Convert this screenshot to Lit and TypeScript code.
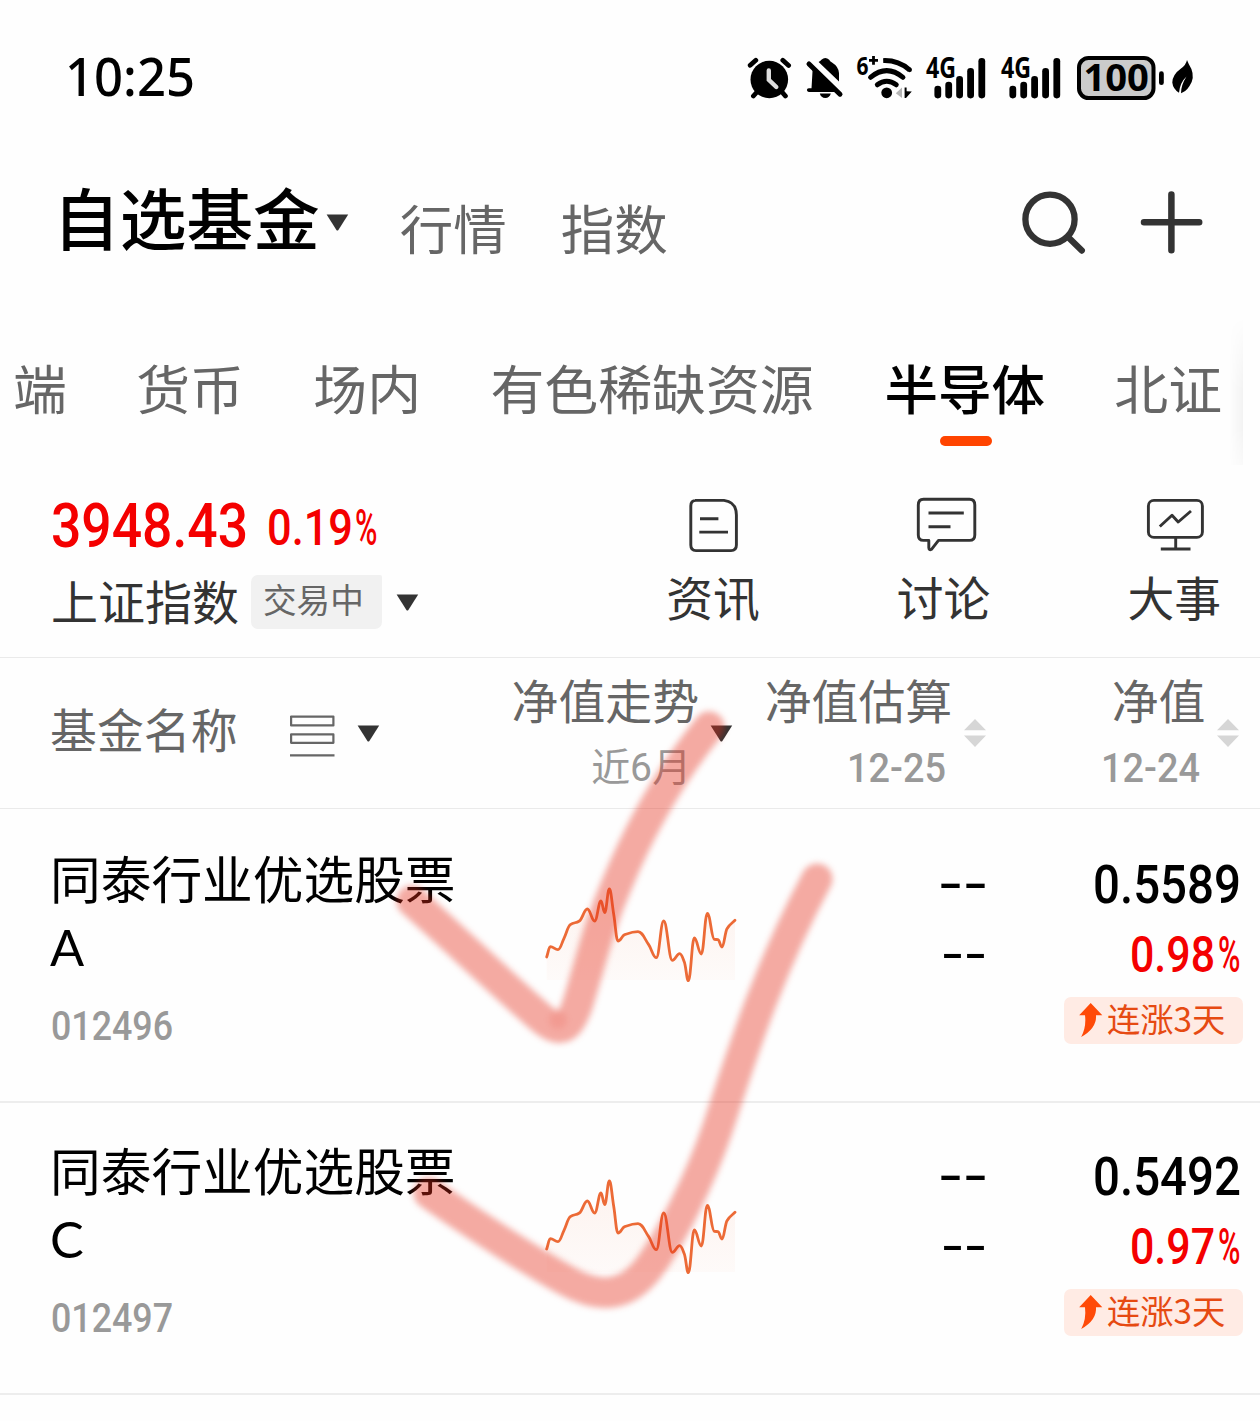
import { LitElement, html, svg, css, TemplateResult } from "lit";
import { customElement, property } from "lit/decorators.js";

const NUM = "Roboto, sans-serif";

/** Inline icon whose viewBox is a window (x, y, w, h) of the drawing grid. */
const icon = (x: number, y: number, w: number, h: number, body: unknown, cls = "") =>
  html`<svg class=${cls} width=${w} height=${h} viewBox="${x} ${y} ${w} ${h}">${body}</svg>`;

/** Figures set to an exact width; the box is as tall as the capitals. */
const fig = (
  text: string, w: number, h: number, cls = "", weight = 500, family = NUM, cap = 0.711,
): TemplateResult =>
  html`<svg class="fig ${cls}" width=${w} height=${h}><text x="0" y=${h} font-size=${h / cap}
    font-weight=${weight} font-family=${family} textLength=${w}
    lengthAdjust="spacingAndGlyphs" fill="currentColor">${text}</text></svg>`;

/** Condensed percent sign, 23 x 36. */
const percent = (cls = "") =>
  html`<svg class=${cls} width="23" height="36"><text transform="translate(0 36) scale(.61 1)" font-size="50"
    font-weight="500" font-family=${NUM} fill="currentColor">%</text></svg>`;

const caret = (cls: string) =>
  html`<svg class=${cls} width="23" height="17" viewBox="0 0 23 17"><path d="M.6 .6H22.2L12.4 16Q11.4 17.2 10.4 16Z" fill="#333"/></svg>`;

const shared = css`
  :host { display: block; }
  svg { display: block; flex: none; overflow: visible; }
  .row { display: flex; align-items: flex-start; }
  div, span { box-sizing: border-box; white-space: nowrap; }
`;

@customElement("status-bar")
class StatusBar extends LitElement {
  static styles = [shared, css`
    .bar { height: 150px; padding: 56px 66px 0 67px; }
    .time { margin-top: 2px; margin-left: -2px; }
    .icons { margin-left: auto; }
    .alarm { margin-right: 15px; }
    .bell { margin-right: 15px; }
    .wifi { margin-right: 14px; }
    .cell { margin-right: 14.6px; }
    .batt { margin-right: 8px; }
  `];

  private cell() {
    const bars = [[8.4, 29.7], [19.3, 25.7], [30.2, 20], [41.2, 12], [52.4, 2]];
    return html`<svg class="cell" width="61" height="44" viewBox="0 0 61 44">
      <text x="0" y="22" font-family="Open Sans, sans-serif" font-weight="700" font-size="28.5"
        textLength="30" lengthAdjust="spacingAndGlyphs">4G</text>
      ${bars.map(([x, y]) => svg`<rect x=${x} y=${y} width="6.8" height=${42.4 - y} rx="3.3"/>`)}
    </svg>`;
  }

  render() {
    return html`<div class="bar row">
      <div class="time">${fig("10:25", 130, 38, "", 500, "Noto Sans, sans-serif", 0.714)}</div>
      <div class="icons row">
        ${icon(748, 56, 43, 44, svg`
          <circle cx="769.3" cy="79.5" r="18.8"/>
          <path d="M750.2 65.3L755.8 60.3M782.8 60.3L788.6 65.5M757 92L753.4 96M782 92L785.4 96" stroke="#000" stroke-width="4.8" stroke-linecap="round"/>
          <path d="M768.8 70.5V79.8L776.3 87" fill="none" stroke="#ddd" stroke-width="4.4" stroke-linecap="round"/>`, "alarm")}
        ${icon(806, 56, 36, 44, svg`
          <path d="M809 64L840 94.2" stroke="#000" stroke-width="5" stroke-linecap="round"/>
          <path d="M812.7 68L834 90.6H811.4Z M808.8 88.3H833L836 92H808.8Q806.9 91.8 806.9 90.1T808.8 88.3Z"/>
          <path d="M818.6 62Q821 60.6 821.4 59.8Q825.3 56 829.2 59.8Q829.8 61.2 832 62.5Q838.5 66.5 839 73V81.5Z"/>
          <path d="M819.8 93.6H830.8Q829.6 98 825.3 98T819.8 93.6Z"/>`, "bell")}
        ${icon(857, 56, 55, 44, svg`
          <text x="856.4" y="74.5" font-family="Open Sans, sans-serif" font-weight="700" font-size="25" textLength="12" lengthAdjust="spacingAndGlyphs">6</text>
          <path d="M869 60.4H878M873.5 56V64.8" stroke="#000" stroke-width="2.8"/>
          <circle cx="886.7" cy="92.8" r="5.4"/>
          <path d="M877.3 84.8Q886.7 77.6 896.3 84.8M870.5 77.3Q886.7 64 903 77.3" fill="none" stroke="#000" stroke-width="4.9" stroke-linecap="round"/>
          <path d="M883.2 60.6Q898 60 909.5 69.8" fill="none" stroke="#000" stroke-width="4.9"/><circle cx="909.6" cy="69.8" r="2.4"/>
          <path d="M895.8 93.2L902 87.4V98Z" fill="#b5b5b5"/><path d="M904.6 87.5H906.6V91.2L911.8 91.5L906 98H904.6Z"/>`, "wifi")}
        ${this.cell()}${this.cell()}
        ${icon(1077, 56, 87, 44, svg`
          <rect x="1079" y="58" width="74.5" height="40" rx="9.5" fill="#cbcbcb" stroke="#000" stroke-width="4"/>
          <text x="1083.4" y="91.2" font-family="Open Sans, sans-serif" font-weight="700" font-size="38" textLength="65.5" lengthAdjust="spacingAndGlyphs">100</text>
          <rect x="1159" y="71.3" width="4.8" height="13.8" rx="2.4"/>`, "batt")}
        ${icon(1172, 56, 22, 44, svg`
          <path d="M1187 60Q1188.5 64 1191.4 69Q1195 78 1189.5 86Q1186 91.5 1181 93.2Q1181 85 1186.5 76.5Q1180 82.5 1179 92.8Q1173 89 1172.3 82.5Q1172.5 74.5 1181 68.5Q1186 65 1187 60Z"/>`)}
      </div>
    </div>`;
  }
}

@customElement("page-header")
class PageHeader extends LitElement {
  static styles = [shared, css`
    .head { height: 160px; padding: 0 57px 0 53px; }
    .title { font-size: 66.7px; line-height: 80px; margin-top: 26px; font-weight: 500; color: #000; }
    .caret { margin: 64px 51px 0 6px; }
    .links { gap: 54px; margin-top: 45px; font-size: 53.5px; line-height: 64px; color: #666; }
    .tools { margin-left: auto; padding-top: 41px; gap: 55px; }
  `];
  render() {
    return html`<div class="head row">
      <div class="title">自选基金</div>${caret("caret")}
      <div class="links row"><span>行情</span><span>指数</span></div>
      <div class="tools row">
        ${icon(1022, 191, 63, 63, svg`<g fill="none" stroke="#333" stroke-width="6.3" stroke-linecap="round"><circle cx="1050" cy="219.2" r="24.6"/><path d="M1068.5 237.5L1081.8 250.6"/></g>`)}
        ${icon(1140, 191, 63, 63, svg`<path d="M1144 222.3H1199.2M1171.4 194.5V250.3" stroke="#333" stroke-width="6.5" stroke-linecap="round"/>`)}
      </div>
    </div>`;
  }
}

@customElement("group-tabs")
class GroupTabs extends LitElement {
  static styles = [shared, css`
    .tabs { position: relative; height: 155px; padding: 45px 0 0 13px; gap: 69.3px; font-size: 53.9px; line-height: 64px; color: #666; overflow: hidden; }
    .tab { display: flex; flex-direction: column; align-items: center; flex: none; }
    .on { color: #000; font-weight: 500; margin-left: 1.5px; font-size: 53.5px; }
    .mark { width: 52px; height: 10px; border-radius: 5px; background: #ff4400; margin: 17px 0 0 3px; }
    .edge { position: absolute; left: 1229px; top: 7px; width: 14px; height: 148px; background: linear-gradient(90deg, rgba(0,0,0,0), rgba(0,0,0,.045)); -webkit-mask-image: linear-gradient(transparent, #000 50%, #000 75%, rgba(0,0,0,.4)); }
  `];
  render() {
    return html`<div class="tabs row">
      ${["端", "货币", "场内", "有色稀缺资源", "半导体", "北证"].map((t) =>
        t === "半导体"
          ? html`<div class="tab on"><span>${t}</span><div class="mark"></div></div>`
          : html`<div class="tab"><span>${t}</span></div>`)}
      <div class="edge"></div>
    </div>`;
  }
}

@customElement("index-bar")
class IndexBar extends LitElement {
  static styles = [shared, css`
    .bar { height: 193px; padding: 0 39px 0 51px; border-bottom: 1px solid #eaeaea; }
    .quote { color: #f40000; padding-top: 39px; height: 110px; }
    .pct { margin: 5px 0 0 19px; }
    .sign { margin: 5px 0 0 2px; }
    .name { font-size: 47px; line-height: 54px; color: #333; margin-top: -2px; }
    .state { width: 131px; height: 54px; margin-left: 12px; padding-left: 12px; background: #f1f1f1; border-radius: 7px 2px 7px 7px; font-size: 33.6px; line-height: 48px; color: #666; }
    .caret { margin: 19px 0 0 14px; }
    .acts { margin-left: auto; gap: 137px; padding-top: 32px; color: #333; font-size: 46.8px; line-height: 56px; }
    .act { display: flex; flex-direction: column; align-items: center; gap: 15px; }
  `];
  render() {
    return html`<div class="bar row">
      <div>
        <div class="quote row">${fig("3948.43", 197, 43)}${fig("0.19", 86, 36, "pct")}${percent("sign")}</div>
        <div class="row"><div class="name">上证指数</div><div class="state">交易中</div>${caret("caret")}</div>
      </div>
      <div class="acts row">
        <div class="act">${icon(689, 497, 49, 56, svg`<g fill="none" stroke="#333" stroke-width="2.9"><path d="M695 500.4H724Q736.4 502 736.4 515V545Q736.4 550.6 731 550.6H696Q690.8 550.6 690.8 545V506Q690.8 500.4 696 500.4Z"/><path d="M700 518.8H718.4M699.3 532.1H728"/></g>`)}<span>资讯</span></div>
        <div class="act">${icon(912.5, 497, 64, 56, svg`<g fill="none" stroke="#333" stroke-width="2.9" stroke-linejoin="round"><path d="M924 499.2H970Q975.3 499.2 975.3 505V535Q975.3 540.4 970 540.4H939L932 549.3Q929.6 550.6 929.3 547.5V540.4H924Q918.8 540.4 918.8 535V505Q918.8 499.2 924 499.2Z"/><path d="M929 513H964.3M929 526.7H951"/></g>`)}<span>讨论</span></div>
        <div class="act">${icon(1143, 497, 63, 56, svg`<g fill="none" stroke="#333" stroke-width="2.9" stroke-linejoin="round"><rect x="1148.4" y="500.4" width="54" height="37" rx="5.5"/><path d="M1175.7 538V549M1160.8 549H1190.5M1159.8 526.5L1172 515.2L1178.2 522L1191 511"/></g>`)}<span>大事</span></div>
      </div>
    </div>`;
  }
}

@customElement("table-head")
class TableHead extends LitElement {
  static styles = [shared, css`
    .head { height: 151px; margin-bottom: 2px; padding-left: 50px; border-bottom: 1px solid #eaeaea; color: #666; font-size: 46.9px; line-height: 56px; }
    .name { margin-top: 42px; }
    .list { margin: 56px 0 0 52px; }
    .caret { margin: 67px 0 0 22px; }
    .col { display: flex; flex-direction: column; align-items: flex-end; padding-top: 13px; }
    .c1 { margin-left: 132px; }
    .c2 { margin-left: 32px; }
    .c3 { margin-left: auto; }
    .sub { height: 46px; margin: 14px 8px 0 0; line-height: 46px; font-size: 39px; color: #999; align-items: flex-start; }
    .six { margin-top: 12px; }
    .date { color: #999; margin: 26px 6px 0 0; }
    .down { margin: 67px 0 0 10.5px; }
    .sort { margin: 61px 0 0 11.5px; }
    .end { margin-right: 21px; }
  `];
  private sort(cls: string) {
    return html`<svg class="sort ${cls}" width="22" height="28" viewBox="0 0 22 28"><path d="M11 0L22 11.3H0ZM0 16.4H22L11 28Z" fill="#d6d6d6"/></svg>`;
  }
  render() {
    return html`<div class="head row">
      <div class="name">基金名称</div>
      ${icon(290, 714, 45, 44, svg`<path d="M291.1 716.6H333.4V725.4H291.1ZM291.1 734.4H333.4V742.8H291.1ZM290 755.4H334.5" fill="none" stroke="#666" stroke-width="2.2" stroke-linejoin="round"/>`, "list")}
      ${caret("caret")}
      <div class="col c1"><div>净值走势</div><div class="sub row"><span>近</span>${fig("6", 22, 28, "six", 400)}<span>月</span></div></div>
      ${caret("down")}
      <div class="col c2"><div>净值估算</div>${fig("12-25", 99, 29, "date")}</div>${this.sort("")}
      <div class="col c3"><div>净值</div>${fig("12-24", 99, 29, "date")}</div>${this.sort("end")}
    </div>`;
  }
}

/* Six-month trend, in thirds of a pixel, on a 570 x 276 field. */
const TREND: [number, number][] = [
  [2, 204], [13, 173], [36, 182], [54, 148], [73, 107], [100, 96], [124, 60], [146, 96], [165, 36],
  [176, 71], [190, 0], [203, 75], [216, 156], [236, 137], [276, 128], [308, 167], [331, 206],
  [353, 96], [379, 214], [401, 194], [415, 219], [427, 275], [445, 147], [466, 195], [484, 73],
  [505, 151], [516, 152], [528, 174], [543, 119], [567, 94],
];

/** Cubic path with level tangents at the turning points. */
function smooth(src: [number, number][]): string {
  const p = src.map(([x, y]) => [x / 3, y / 3]);
  const d = p.slice(1).map((q, i) => (q[1] - p[i][1]) / (q[0] - p[i][0]));
  const m = p.map((_, i) => {
    if (i === 0) return d[0];
    if (i === p.length - 1) return d[i - 1];
    return d[i - 1] * d[i] <= 0 ? 0 : (2 * d[i - 1] * d[i]) / (d[i - 1] + d[i]);
  });
  let out = `M${p[0][0]} ${p[0][1]}`;
  for (let i = 1; i < p.length; i++) {
    const h = (p[i][0] - p[i - 1][0]) / 2.4;
    out += `C${p[i - 1][0] + h} ${p[i - 1][1] + m[i - 1] * h} ${p[i][0] - h} ${p[i][1] - m[i] * h} ${p[i][0]} ${p[i][1]}`;
  }
  return out;
}

@customElement("fund-row")
class FundRow extends LitElement {
  @property() share = "";
  @property() code = "";
  @property() value = "";
  @property() gain = "";
  static styles = [shared, css`
    .fund { height: 292px; padding-left: 50px; border-bottom: 2px solid #ededed; }
    .name { width: 405px; padding-top: 32px; font-size: 50.7px; line-height: 68px; color: #000; }
    .share { font-family: Lato, sans-serif; font-size: 50.5px; height: 68px; padding-top: 1.5px; }
    .code { color: #999; margin: 32px 0 0 1px; }
    .trend { margin: 78px 0 0 91px; }
    .est { margin-left: 203px; padding-top: 52px; width: 49px; display: flex; flex-direction: column; align-items: flex-end; }
    .dash2 { margin: 33px 1px 0 0; }
    .nav { margin-left: auto; padding: 54px 17px 0 0; display: flex; flex-direction: column; align-items: flex-end; color: #000; }
    .value { margin-right: 2px; }
    .gain { color: #f40000; margin: 33px 2px 0 0; gap: 3px; }
    .badge { width: 179px; height: 47px; margin-top: 25px; padding-left: 15px; border-radius: 7px; background: #ffebe4; color: #e64a12; font-size: 33.3px; line-height: 41px; }
    .up { margin: 6px 4px 0 0; }
  `];
  render() {
    const line = smooth(TREND);
    return html`<div class="fund row">
      <div class="name"><div>同泰行业优选股票</div><div class="share">${this.share}</div>${fig(this.code, 122, 29, "code")}</div>
      <svg class="trend" width="190" height="92" viewBox="0 0 190 92">
        <defs><linearGradient id="g" x1="0" y1="0" x2="0" y2="1"><stop offset="0" stop-color="#f26a36" stop-opacity=".08"/><stop offset="1" stop-color="#f26a36" stop-opacity=".025"/></linearGradient></defs>
        <path d="${line}V91H.7Z" fill="url(#g)"/>
        <path d=${line} fill="none" stroke="#ec6a36" stroke-width="2.8" stroke-linecap="round" stroke-linejoin="round"/>
      </svg>
      <div class="est">${fig("--", 50, 38, "", 400, "Liberation Sans, sans-serif", 0.69)}${fig("--", 46, 36, "dash2", 400, "Liberation Sans, sans-serif", 0.69)}</div>
      <div class="nav">
        ${fig(this.value, 148, 38, "value")}
        <div class="gain row">${fig(this.gain, 85, 36)}${percent()}</div>
        <div class="badge row">${icon(1079, 1003, 24, 34, svg`<path d="M1090.7 1003L1102.3 1015.2H1096Q1097 1028 1081.2 1037Q1086.5 1027 1085 1015.2H1079.2Z" fill="#ff4a08"/>`, "up")}<span>连涨3天</span></div>
      </div>
    </div>`;
  }
}

@customElement("app-root")
class AppRoot extends LitElement {
  static styles = [shared, css`
    :host { position: relative; width: 1260px; height: 1421px; overflow: hidden; background: #fefefe; font-family: "Noto Sans CJK SC", sans-serif; }
    .ink { position: absolute; left: 0; top: 0; pointer-events: none; }
  `];
  render() {
    return html`
      <status-bar></status-bar>
      <page-header></page-header>
      <group-tabs></group-tabs>
      <index-bar></index-bar>
      <table-head></table-head>
      <fund-row share="A" code="012496" value="0.5589" gain="0.98"></fund-row>
      <fund-row share="C" code="012497" value="0.5492" gain="0.97"></fund-row>
      <svg class="ink" width="1260" height="1421" viewBox="0 0 1260 1421">
        <defs><filter id="soft" filterUnits="userSpaceOnUse" x="350" y="660" width="550" height="720" color-interpolation-filters="sRGB"><feGaussianBlur stdDeviation="3.2"/></filter></defs>
        <g fill="none" stroke="#e62c1a" stroke-opacity=".4" stroke-width="31" stroke-linecap="round" stroke-linejoin="round" filter="url(#soft)">
          <path d="M412 901C450 935 500 982 532 1010C556 1032 566 1036 577 1006C590 965 597 930 617 884C640 828 670 775 709 727"/>
          <path d="M429 1193C460 1215 525 1258 567 1281C600 1299 625 1297 647 1270C670 1240 700 1180 717 1130C737 1070 765 975 817 879"/>
          <circle cx="558" cy="1020" r="4" stroke-width="10" stroke-opacity=".12"/>
        </g>
      </svg>`;
  }
}
